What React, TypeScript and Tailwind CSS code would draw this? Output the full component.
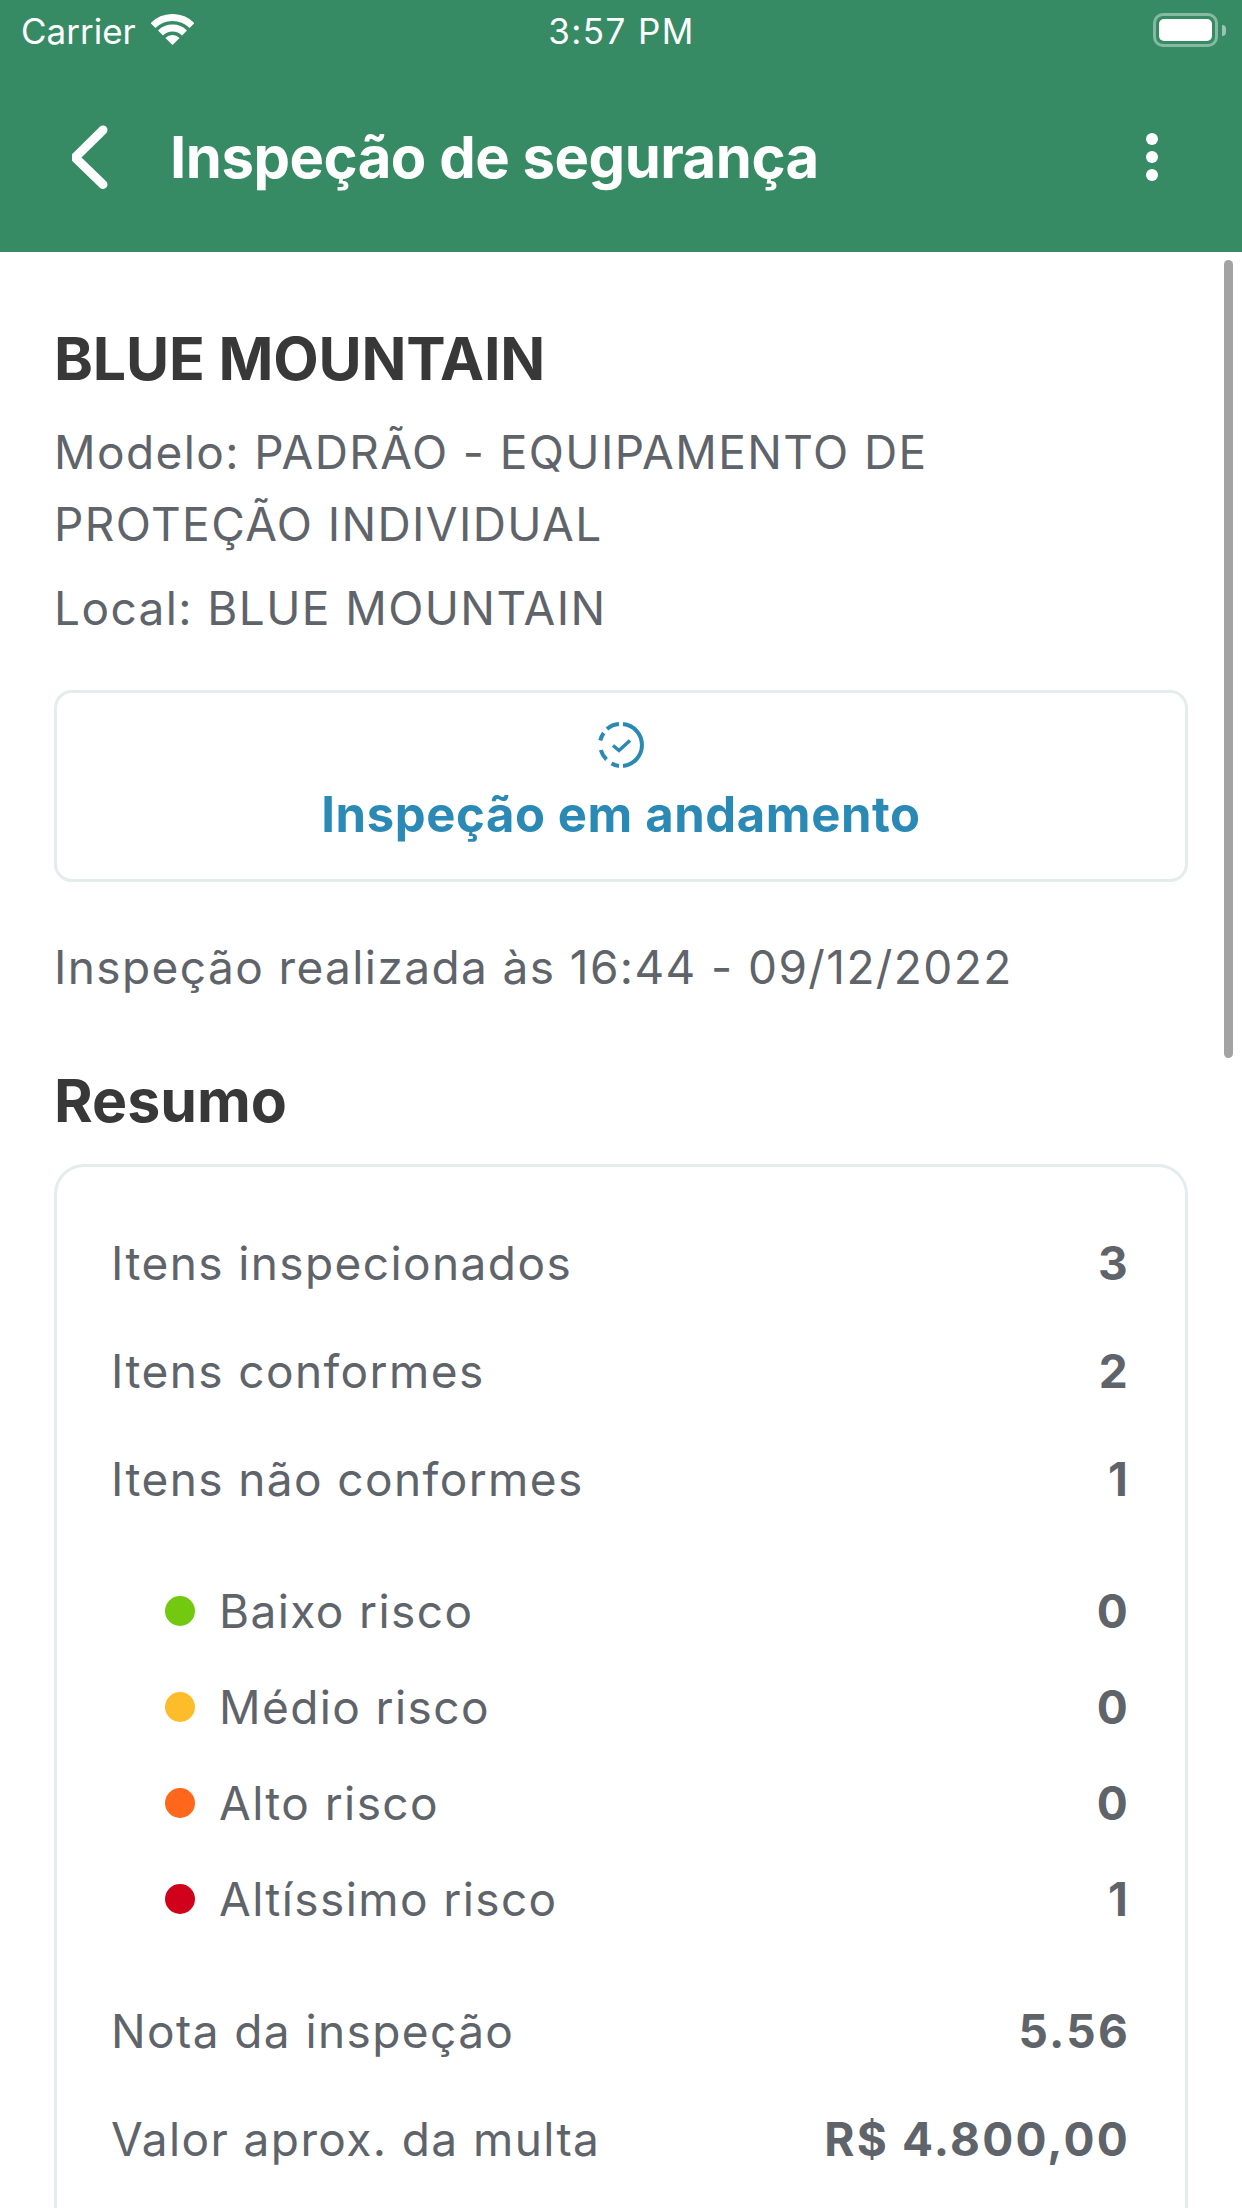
const FONT = "font-['Inter','Liberation_Sans',sans-serif]";

const LINHAS_TOPO = [
  { label: 'Itens inspecionados', valor: '3' },
  { label: 'Itens conformes', valor: '2' },
  { label: 'Itens não conformes', valor: '1' },
];

const RISCOS = [
  { label: 'Baixo risco', valor: '0', cor: 'bg-[#73c90f]' },
  { label: 'Médio risco', valor: '0', cor: 'bg-[#fdbd2a]' },
  { label: 'Alto risco', valor: '0', cor: 'bg-[#fe671c]' },
  { label: 'Altíssimo risco', valor: '1', cor: 'bg-[#d0021b]' },
];

const LINHAS_FIM = [
  { label: 'Nota da inspeção', valor: '5.56' },
  { label: 'Valor aprox. da multa', valor: 'R$ 4.800,00' },
];

function StatusBar() {
  return (
    <div className="h-[63px] pl-[21px] pr-[16px] grid grid-cols-3 items-center text-white text-[35px] leading-none">
      <div className="flex items-center gap-[15px]">
        <span>Carrier</span>
        <svg className="mb-[3px]" width="43" height="32" viewBox="0 0 43 32" fill="none" stroke="white" strokeWidth="7">
          <path d="M2 11.600a27.500 27.500 0 0 1 39 0" />
          <path d="M9.500 19a17 17 0 0 1 24 0" />
          <path d="M21.500 31 14.400 23.900a10 10 0 0 1 14.200 0z" fill="white" stroke="none" />
        </svg>
      </div>
      <span className="text-center tracking-[1.4px] pr-[4px]">3:57 PM</span>
      <div className="flex justify-end items-center mb-[3px]">
        <div className="w-[65px] h-[34px] rounded-[10px] border-[3px] border-white/40 p-[3px]">
          <div className="w-full h-full rounded-[5px] bg-white" />
        </div>
        <div className="ml-[4px] w-[4px] h-[11px] rounded-r-full bg-white/50" />
      </div>
    </div>
  );
}

function Header() {
  return (
    <div className="h-[189px] pl-[72px] pr-[84px] pb-[2px] flex items-center">
      <svg width="38" height="68" viewBox="2 0 38 68" fill="none" stroke="white" strokeWidth="9" strokeLinecap="round" strokeLinejoin="round">
        <path d="M33 7 5 34.500 33 61.500" />
      </svg>
      <h1 className="ml-[60px] flex-1 text-[58px] font-bold leading-none text-white tracking-[-0.5px]">
        Inspeção de segurança
      </h1>
      <div className="flex flex-col gap-[6px]">
        <span className="w-[12px] h-[12px] rounded-full bg-white" />
        <span className="w-[12px] h-[12px] rounded-full bg-white" />
        <span className="w-[12px] h-[12px] rounded-full bg-white" />
      </div>
    </div>
  );
}

function IconeAndamento() {
  return (
    <svg width="46" height="46" viewBox="0 0 46 46" fill="none" stroke="#2b8ab5" strokeWidth="4">
      <path d="M25 2.100A21 21 0 0 1 25 43.900" />
      <path d="M21 43.900a21 21 0 0 1-7.500-2.300" />
      <path d="M8.500 37.500a21 21 0 0 1-5.700-9.500" />
      <path d="M2.300 18.500a21 21 0 0 1 3.400-7.500" />
      <path d="M9 7a21 21 0 0 1 12-4.900" />
      <path d="m15 23.500 6 5 11-10" strokeWidth="3.500" />
    </svg>
  );
}

function Linha({ label, valor }: { label: string; valor: string }) {
  return (
    <div className="flex items-center justify-between">
      <span>{label}</span>
      <span className="font-bold tracking-[2.2px]">{valor}</span>
    </div>
  );
}

export default function App() {
  return (
    <div className={`relative w-[1242px] h-[2208px] overflow-hidden bg-white ${FONT}`}>
      <div className="bg-[#368b65]">
        <StatusBar />
        <Header />
      </div>

      <div className="px-[54px] pt-[78px]">
        <h2 className="text-[59px] leading-[58px] font-bold tracking-[-0.2px] text-[#383838]">BLUE MOUNTAIN</h2>

        <div className="mt-[28px] text-[46px] leading-[72px] tracking-[1.4px] text-[#5f646b]">
          Modelo: PADRÃO - EQUIPAMENTO DE
          <br />
          PROTEÇÃO INDIVIDUAL
        </div>
        <div className="mt-[12px] text-[46px] leading-[72px] tracking-[1.4px] text-[#5f646b]">Local: BLUE MOUNTAIN</div>

        <div className="mt-[46px] h-[192px] rounded-[18px] border-[3px] border-[#e4ecee] flex flex-col items-center pt-[29px]">
          <IconeAndamento />
          <span className="mt-[18px] text-[49px] leading-[58px] font-bold tracking-[0.6px] text-[#2b8ab5]">
            Inspeção em andamento
          </span>
        </div>

        <p className="mt-[49px] text-[46px] leading-[72px] tracking-[1.4px] text-[#5f646b]">
          Inspeção realizada às 16:44 - 09/12/2022
        </p>

        <h2 className="mt-[66px] text-[59px] leading-[64px] font-bold text-[#383838]">Resumo</h2>

        <div className="mt-[31px] rounded-t-[30px] border-[3px] border-b-0 border-[#e4ecee] pt-[69px] pl-[54px] pr-[55px] text-[46px] tracking-[1.4px] text-[#5f646b] h-[1200px]">
          <div className="flex flex-col gap-[54px] leading-[54px]">
            {LINHAS_TOPO.map((l) => (
              <Linha key={l.label} label={l.label} valor={l.valor} />
            ))}
          </div>

          <div className="mt-[81px] pl-[54px] flex flex-col gap-[48px] leading-[48px]">
            {RISCOS.map((r) => (
              <div key={r.label} className="flex items-center">
                <span className={`w-[30px] h-[30px] rounded-full ${r.cor}`} />
                <span className="ml-[24px] flex-1">{r.label}</span>
                <span className="font-bold tracking-[2.2px]">{r.valor}</span>
              </div>
            ))}
          </div>

          <div className="mt-[81px] flex flex-col gap-[54px] leading-[54px]">
            {LINHAS_FIM.map((l) => (
              <Linha key={l.label} label={l.label} valor={l.valor} />
            ))}
          </div>
        </div>
      </div>

      <div className="absolute left-[1224px] top-[260px] w-[9px] h-[798px] rounded-full bg-[#a3a3a3]" />
    </div>
  );
}
